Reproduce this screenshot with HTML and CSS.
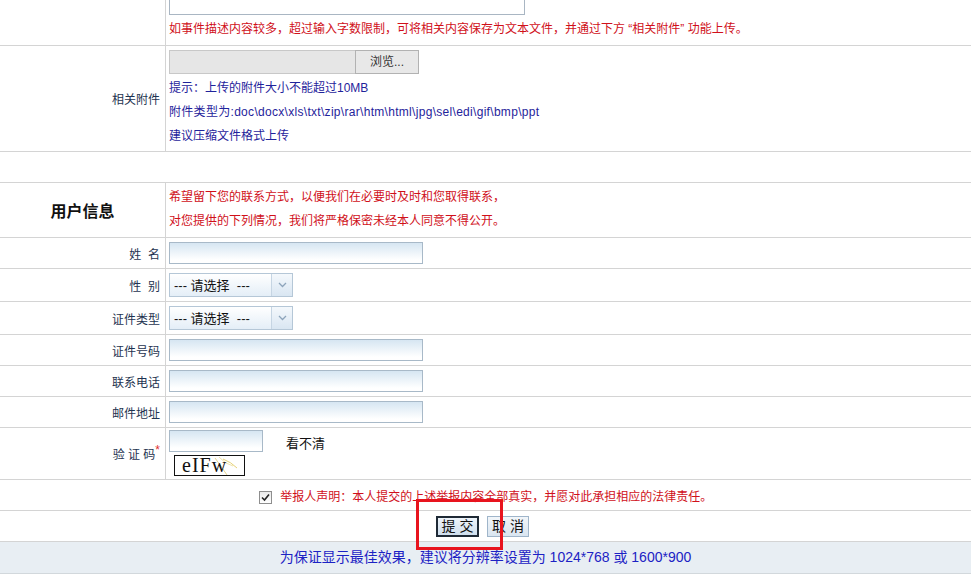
FILE: index.html
```html
<!DOCTYPE html>
<html lang="zh-CN">
  <head>
    <meta charset="UTF-8" />
    <title>举报信息填写</title>
    <link rel="stylesheet" href="styles.css">
  </head>
  <body>
    <table class="form-table">
      <tr>
        <td class="label"></td>
        <td class="field first">
          <textarea class="desc-box"></textarea>
          <div class="note-red">如事件描述内容较多，超过输入字数限制，可将相关内容保存为文本文件，并通过下方 “相关附件” 功能上传。</div>
        </td>
      </tr>
      <tr>
        <td class="label">相关附件</td>
        <td class="field attach">
          <div class="file-input">
            <span class="file-path"></span>
            <span class="file-btn">浏览...</span>
          </div>
          <div class="hint">提示：上传的附件大小不能超过10MB</div>
          <div class="hint types">附件类型为:doc\docx\xls\txt\zip\rar\htm\html\jpg\sel\edi\gif\bmp\ppt</div>
          <div class="hint">建议压缩文件格式上传</div>
        </td>
      </tr>
      <tr>
        <td class="spacer" colspan="2"></td>
      </tr>
      <tr>
        <td class="label section-title">用户信息</td>
        <td class="field info">
          <div class="note-red">希望留下您的联系方式，以便我们在必要时及时和您取得联系，</div>
          <div class="note-red">对您提供的下列情况，我们将严格保密未经本人同意不得公开。</div>
        </td>
      </tr>
      <tr class="row">
        <td class="label">姓&nbsp;&nbsp;名</td>
        <td class="field"><input class="text-input" type="text" /></td>
      </tr>
      <tr class="row tall">
        <td class="label">性&nbsp;&nbsp;别</td>
        <td class="field">
          <span class="select-box">
            <select><option>--- 请选择 &nbsp;---</option></select>
            <span class="select-arrow">
              <svg width="9" height="6" viewBox="0 0 9 6"><path d="M1 1 L4.5 4.5 L8 1" fill="none" stroke="#8da4bb" stroke-width="1.3"/></svg>
            </span>
          </span>
        </td>
      </tr>
      <tr class="row tall">
        <td class="label">证件类型</td>
        <td class="field">
          <span class="select-box">
            <select><option>--- 请选择 &nbsp;---</option></select>
            <span class="select-arrow">
              <svg width="9" height="6" viewBox="0 0 9 6"><path d="M1 1 L4.5 4.5 L8 1" fill="none" stroke="#8da4bb" stroke-width="1.3"/></svg>
            </span>
          </span>
        </td>
      </tr>
      <tr class="row">
        <td class="label">证件号码</td>
        <td class="field"><input class="text-input" type="text" /></td>
      </tr>
      <tr class="row">
        <td class="label">联系电话</td>
        <td class="field"><input class="text-input" type="text" /></td>
      </tr>
      <tr class="row">
        <td class="label">邮件地址</td>
        <td class="field"><input class="text-input" type="text" /></td>
      </tr>
      <tr class="row captcha-row">
        <td class="label">验&nbsp;证&nbsp;码<span class="required">*</span></td>
        <td class="field">
          <div class="captcha-line">
            <input class="text-input short" type="text" />
            <span class="refresh">看不清</span>
          </div>
          <div class="captcha-img">
            <svg class="captcha-svg" width="69" height="19" viewBox="0 0 69 19">
              <path d="M40 2 Q46 10 52 19" fill="none" stroke="#e8d890" stroke-width="1"/>
              <path d="M48 3 Q56 6 62 12" fill="none" stroke="#e6d27a" stroke-width="1"/>
              <path d="M44 1 Q50 8 58 10" fill="none" stroke="#f0e4a8" stroke-width="1"/>
              <text x="7" y="16" class="captcha-text">eIFw</text>
            </svg>
          </div>
        </td>
      </tr>
      <tr>
        <td class="declare" colspan="2">
          <span class="check-box">
            <svg width="9" height="9" viewBox="0 0 9 9"><path d="M1 4.5 L3.5 7 L8 1.5" fill="none" stroke="#222" stroke-width="1.6"/></svg>
          </span>
          <span class="declare-text">举报人声明：本人提交的上述举报内容全部真实，并愿对此承担相应的法律责任。</span>
        </td>
      </tr>
      <tr>
        <td class="actions" colspan="2">
          <span class="btn-group">
            <button class="btn btn-submit">提&nbsp;交</button>
            <button class="btn btn-cancel">取&nbsp;消</button>
            <span class="highlight"></span>
          </span>
        </td>
      </tr>
    </table>

    <div class="footer">为保证显示最佳效果，建议将分辨率设置为 <span class="num">1024*768</span> 或 <span class="num">1600*900</span></div>
  </body>
</html>
```

FILE: styles.css
```css
html,
body {
  margin: 0;
  padding: 0;
  background: #fff;
  overflow: hidden;
}

body {
  font-family: "Liberation Sans", "Noto Sans CJK SC", sans-serif;
  font-size: 12px;
  color: #1e3350;
}

.form-table {
  width: 100%;
  border-collapse: collapse;
  table-layout: fixed;
  margin-top: -50px;
}

.form-table td {
  border-bottom: 1px solid #d4d4d4;
  padding: 0;
}

.label {
  width: 160px;
  padding-right: 5px !important;
  text-align: right;
  border-right: 1px solid #d4d4d4;
  color: #1e3350;
  white-space: nowrap;
}

.field {
  padding-left: 3px !important;
}

.first {
  padding-top: 4px !important;
  padding-bottom: 4px !important;
}

.desc-box {
  display: block;
  width: 356px;
  height: 61px;
  margin: 0 0 2px 0;
  box-sizing: border-box;
  border: 1px solid #a9b6c3;
  resize: none;
}

.note-red {
  color: #d0101a;
  line-height: 24px;
  white-space: nowrap;
}

.attach {
  padding-top: 4px !important;
  padding-bottom: 3px !important;
}

.file-input {
  display: flex;
  height: 24px;
  margin-bottom: 2px;
}

.file-path {
  width: 186px;
  box-sizing: border-box;
  background: #e6e6e6;
  border: 1px solid #c8c8c8;
  border-right: none;
}

.file-btn {
  width: 64px;
  box-sizing: border-box;
  background: #e8e8e8;
  border: 1px solid #b2b2b2;
  text-align: center;
  line-height: 22px;
  color: #333;
}

.hint {
  color: #1f239b;
  line-height: 24px;
  white-space: nowrap;
}

.hint.types {
  letter-spacing: 0.3px;
}

.spacer {
  height: 30px;
}

.section-title {
  text-align: center;
  padding-right: 0 !important;
  font-size: 16px;
  font-weight: bold;
  color: #111;
}

.info {
  padding-top: 2px !important;
  padding-bottom: 4px !important;
}

.row td {
  height: 30px;
}

.row.tall td {
  height: 32px;
}

.text-input {
  display: block;
  width: 254px;
  height: 22px;
  box-sizing: border-box;
  margin: 0;
  border: 1px solid #a8b9c8;
  background: linear-gradient(#d6e6f2, #ffffff 85%);
  outline: none;
}

.text-input.short {
  width: 94px;
}

.select-box {
  display: flex;
  width: 124px;
  height: 24px;
  box-sizing: border-box;
  border: 1px solid #b5c7d7;
  background: linear-gradient(#ffffff, #e4eef7);
}

.select-box select {
  flex: 1;
  min-width: 0;
  appearance: none;
  -webkit-appearance: none;
  border: none;
  background: transparent;
  font-family: "Liberation Sans", "Noto Sans CJK SC", sans-serif;
  font-size: 13px;
  color: #111;
  padding: 0 4px;
  outline: none;
}

.select-arrow {
  width: 20px;
  display: flex;
  align-items: center;
  justify-content: center;
  border-left: 1px solid #c6d5e3;
  background: linear-gradient(#f4f8fc, #d9e6f2);
}

.captcha-row td {
  height: 51px;
}

.captcha-line {
  display: flex;
  align-items: center;
  gap: 23px;
  margin-top: 2px;
}

.refresh {
  color: #111;
  font-size: 13px;
  margin-top: 3px;
}

.captcha-img {
  display: inline-block;
  margin: 3px 0 3px 5px;
  border: 1px solid #111;
  height: 19px;
  line-height: 0;
}

.captcha-svg {
  overflow: visible;
}

.captcha-text {
  font-family: "Liberation Serif", serif;
  font-size: 20px;
  fill: #111;
  letter-spacing: 1px;
}

.required {
  color: #e03030;
  font-size: 12px;
  vertical-align: top;
  position: relative;
  top: -2px;
}

.declare {
  height: 30px;
  text-align: center;
}

.check-box {
  display: inline-flex;
  align-items: center;
  justify-content: center;
  width: 11px;
  height: 11px;
  border: 1px solid #8e8e8e;
  background: linear-gradient(#e9e9e9, #ffffff);
  vertical-align: -1px;
  margin-right: 5px;
}

.declare-text {
  color: #d0101a;
}

.actions {
  height: 30px;
  text-align: center;
}

.btn-group {
  position: relative;
  display: inline-flex;
  gap: 8px;
  vertical-align: middle;
  margin-right: 6px;
}

.btn {
  height: 21px;
  box-sizing: border-box;
  padding: 0;
  font-family: "Liberation Sans", "Noto Sans CJK SC", sans-serif;
  font-size: 14px;
  line-height: 17px;
  color: #111;
  cursor: pointer;
}

.btn-submit {
  width: 43px;
  border: 2px solid #1f2a36;
  background: linear-gradient(#eef4fa, #cfdeed);
}

.btn-cancel {
  width: 42px;
  border: 1px solid #9fb5ca;
  background: linear-gradient(#f2f6fa, #d9e5f0);
}

.highlight {
  position: absolute;
  left: -20px;
  top: -17px;
  width: 87px;
  height: 51px;
  box-sizing: border-box;
  border: 3px solid #e8141e;
  pointer-events: none;
}

.footer {
  height: 31px;
  line-height: 31px;
  background: #e8eef3;
  border-bottom: 1px solid #d2d8dc;
  text-align: center;
  font-size: 14px;
  color: #1c22c4;
}
```
